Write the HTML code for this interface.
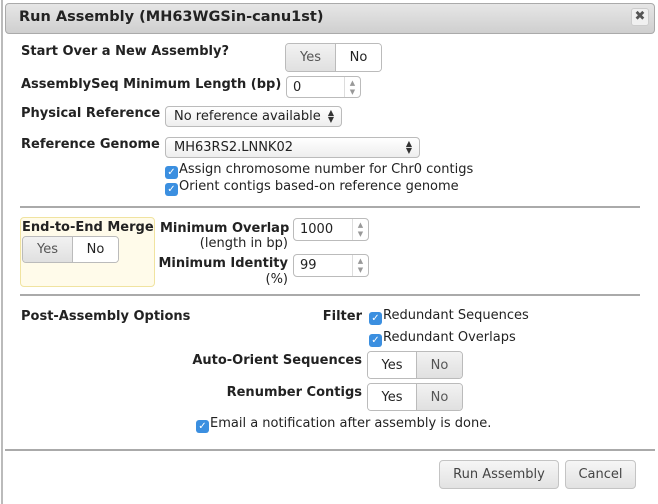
<!DOCTYPE html>
<html><head><style>
*{box-sizing:border-box;margin:0;padding:0}
body{width:658px;height:504px;background:#fff;font-family:"DejaVu Sans","Liberation Sans",sans-serif;font-size:13px;color:#222;position:relative;overflow:hidden}
.a{position:absolute;white-space:nowrap}
.b{font-weight:bold;color:#222}
.title{left:5px;top:3px;width:650px;height:31px;border:1px solid #aaa;border-radius:4px;background:linear-gradient(#e6e6e6,#cfcfcf)}
.x{left:631px;top:8px;width:18px;height:18px;border:1px solid #ccc;border-radius:3px;background:#f0f0f0;color:#555;font-size:13px;font-weight:bold;text-align:center;line-height:16px}
.tg{display:flex;border:1px solid #bbb;border-radius:4px;overflow:hidden}
.tg div{display:flex;align-items:center;justify-content:center;height:100%;font-size:13px}
.on{background:#fff;color:#222}
.off{background:linear-gradient(#f2f2f2,#e0e0e0);color:#555}
.inp{border:1px solid #bbb;border-radius:4px;background:#fff;padding-left:6px;display:flex;align-items:center;font-size:13px}
.sp{position:absolute;right:0;top:0;bottom:0;width:16px;border-left:1px solid #ddd;color:#999;font-size:7px;line-height:9px;text-align:center;padding-top:2px}
.sel{border:1px solid #bbb;border-radius:4px;background:linear-gradient(#fff,#eee);padding-left:8px;display:flex;align-items:center;font-size:13px}
.ar{position:absolute;right:7px;top:2px;font-size:8px;line-height:7px;color:#333}
.cb{display:inline-block;width:13px;height:13px;background:#3b8fe0;border-radius:3px;color:#fff;font-size:10px;line-height:13px;text-align:center;vertical-align:-2px;margin-right:1px}
.hr{height:2px;background:#aaa}
.btn{border:1px solid #c4c4c4;border-radius:4px;background:linear-gradient(#f6f6f6,#e2e2e2);display:flex;align-items:center;justify-content:center;color:#444;font-size:13px}
</style></head><body>
<div class="a" style="left:1px;top:0;width:2px;height:504px;background:#bbb"></div>
<div class="a title"></div>
<div class="a b" style="left:19px;top:9px;font-size:14.5px">Run Assembly (MH63WGSin-canu1st)</div>
<div class="a x">✖</div>

<div class="a b" style="left:21px;top:44px">Start Over a New Assembly?</div>
<div class="a tg" style="left:285px;top:43px;width:97px;height:29px"><div class="off" style="width:50px;border-right:1px solid #bbb">Yes</div><div class="on" style="flex:1">No</div></div>

<div class="a b" style="left:21px;top:77px">AssemblySeq Minimum Length (bp)</div>
<div class="a inp" style="left:286px;top:76px;width:75px;height:22px">0<div class="sp">▲<br>▼</div></div>

<div class="a b" style="left:21px;top:106px">Physical Reference</div>
<div class="a sel" style="left:165px;top:106px;width:177px;height:21px">No reference available<div class="ar">▲<br>▼</div></div>

<div class="a b" style="left:21px;top:137px">Reference Genome</div>
<div class="a sel" style="left:165px;top:137px;width:255px;height:21px">MH63RS2.LNNK02<div class="ar">▲<br>▼</div></div>
<div class="a" style="left:165px;top:162px"><span class="cb">✓</span>Assign chromosome number for Chr0 contigs</div>
<div class="a" style="left:165px;top:179px"><span class="cb">✓</span>Orient contigs based-on reference genome</div>

<div class="a hr" style="left:20px;top:206px;width:620px"></div>

<div class="a" style="left:20px;top:217px;width:135px;height:70px;border:1px solid #f0e3a0;border-radius:4px;background:#fffbea"></div>
<div class="a b" style="left:22px;top:220px">End-to-End Merge</div>
<div class="a tg" style="left:22px;top:236px;width:97px;height:27px"><div class="off" style="width:50px;border-right:1px solid #bbb">Yes</div><div class="on" style="flex:1">No</div></div>

<div class="a b" style="left:160px;top:221px;width:128px;text-align:right">Minimum Overlap</div>
<div class="a" style="left:160px;top:236px;width:128px;text-align:right">(length in bp)</div>
<div class="a inp" style="left:293px;top:218px;width:76px;height:23px">1000<div class="sp">▲<br>▼</div></div>
<div class="a b" style="left:150px;top:256px;width:138px;text-align:right">Minimum Identity</div>
<div class="a" style="left:160px;top:272px;width:128px;text-align:right">(%)</div>
<div class="a inp" style="left:293px;top:254px;width:76px;height:23px">99<div class="sp">▲<br>▼</div></div>

<div class="a hr" style="left:20px;top:294px;width:620px"></div>

<div class="a b" style="left:21px;top:309px">Post-Assembly Options</div>
<div class="a b" style="left:262px;top:309px;width:100px;text-align:right">Filter</div>
<div class="a" style="left:369px;top:308px"><span class="cb">✓</span>Redundant Sequences</div>
<div class="a" style="left:369px;top:330px"><span class="cb">✓</span>Redundant Overlaps</div>
<div class="a b" style="left:162px;top:353px;width:200px;text-align:right">Auto-Orient Sequences</div>
<div class="a tg" style="left:367px;top:351px;width:96px;height:28px"><div class="on" style="width:49px;border-right:1px solid #bbb">Yes</div><div class="off" style="flex:1">No</div></div>
<div class="a b" style="left:162px;top:385px;width:200px;text-align:right">Renumber Contigs</div>
<div class="a tg" style="left:367px;top:383px;width:96px;height:28px"><div class="on" style="width:49px;border-right:1px solid #bbb">Yes</div><div class="off" style="flex:1">No</div></div>
<div class="a" style="left:196px;top:416px"><span class="cb">✓</span>Email a notification after assembly is done.</div>

<div class="a hr" style="left:5px;top:449px;width:650px"></div>
<div class="a btn" style="left:439px;top:460px;width:120px;height:29px">Run Assembly</div>
<div class="a btn" style="left:565px;top:460px;width:71px;height:29px">Cancel</div>
</body></html>
